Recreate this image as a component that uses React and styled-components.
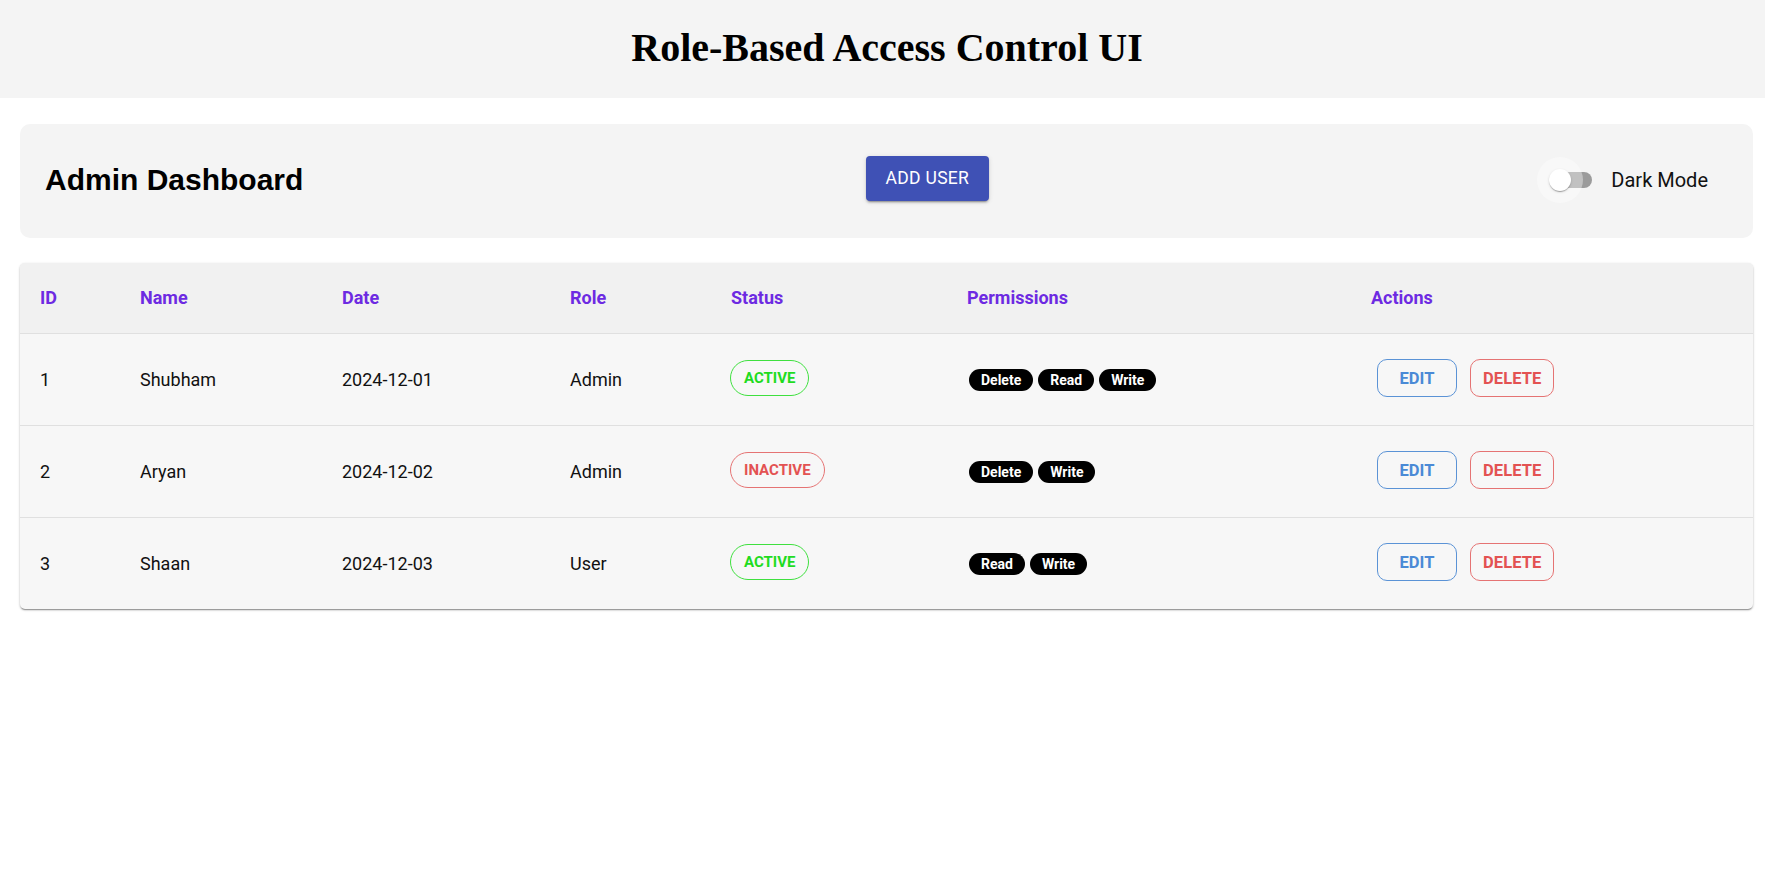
import React, { useState } from "react";
import styled, { createGlobalStyle } from "styled-components";

const GlobalStyle = createGlobalStyle`
  * { box-sizing: border-box; }
  body {
    margin: 0;
    background: #ffffff;
    font-family: Roboto, "Liberation Sans", sans-serif;
    color: #111;
  }
`;

const TopBar = styled.header`
  background: #f4f4f4;
  padding: 25px 0 27px 9px;
  text-align: center;
`;

const PageTitle = styled.h1`
  margin: 0;
  font-family: "Liberation Serif", "Times New Roman", serif;
  font-size: 40px;
  font-weight: 700;
  line-height: 46px;
  color: #000;
`;

const Main = styled.main`
  padding: 26px 12px 0 20px;
  display: flex;
  flex-direction: column;
  gap: 25px;
`;

const DashCard = styled.section`
  background: #f4f4f4;
  border-radius: 10px;
  height: 114px;
  padding: 0 24px 2px;
  display: flex;
  align-items: center;
  justify-content: space-between;
`;

const DashTitle = styled.h2`
  margin: 0 0 0 1px;
  font-family: "Liberation Sans", Arial, sans-serif;
  font-size: 30px;
  font-weight: 700;
  color: #000;
`;

const AddButton = styled.button`
  height: 45px;
  padding: 0 20px;
  margin-bottom: 4px;
  margin-left: 13px;
  border: none;
  border-radius: 4px;
  background: #3f51b5;
  color: #fff;
  font-family: Roboto, sans-serif;
  font-size: 17.5px;
  font-weight: 400;
  letter-spacing: 0.3px;
  box-shadow: 0 3px 1px -2px rgba(0,0,0,.2), 0 2px 2px 0 rgba(0,0,0,.14), 0 1px 5px 0 rgba(0,0,0,.12);
  cursor: pointer;
`;

const ToggleLabel = styled.label`
  display: flex;
  align-items: center;
  gap: 13px;
  margin-right: 21px;
  font-size: 20px;
  color: #111;
  cursor: pointer;
`;

const SwitchBox = styled.span`
  position: relative;
  width: 60px;
  height: 46px;
  display: inline-block;
`;

const Track = styled.span`
  position: absolute;
  left: 16px;
  top: 15px;
  width: 38px;
  height: 16px;
  border-radius: 8px;
  background: ${({ $on }) => ($on ? "#7986cb" : "#9b9b9b")};
`;

const Halo = styled.span`
  position: absolute;
  left: ${({ $on }) => ($on ? "21px" : "-1px")};
  top: 0;
  width: 46px;
  height: 46px;
  border-radius: 50%;
  background: rgba(255, 255, 255, 0.38);
`;

const Thumb = styled.span`
  position: absolute;
  left: ${({ $on }) => ($on ? "33px" : "11px")};
  top: 12px;
  width: 22px;
  height: 22px;
  border-radius: 50%;
  background: ${({ $on }) => ($on ? "#3f51b5" : "#fff")};
  box-shadow: 0 2px 1px -1px rgba(0,0,0,.2), 0 1px 1px 0 rgba(0,0,0,.14), 0 1px 3px 0 rgba(0,0,0,.12);
`;

const TablePaper = styled.div`
  border-radius: 5px;
  overflow: hidden;
  background: #f7f7f7;
  box-shadow: 0 2px 1px -1px rgba(0,0,0,.25), 0 1px 2px 0 rgba(0,0,0,.2), 0 1px 3px 0 rgba(0,0,0,.12);
  margin-bottom: 4px;
`;

const Table = styled.table`
  width: 100%;
  border-collapse: collapse;
  table-layout: fixed;
`;

const HeadRow = styled.tr`
  height: 70px;
  background: #f1f1f1;
  border-bottom: 1px solid #e0e0e0;
`;

const Th = styled.th`
  padding: 0 20px;
  text-align: left;
  font-size: 18px;
  font-weight: 700;
  color: #6d2ae2;
`;

const Row = styled.tr`
  height: 92px;
  border-bottom: 1px solid #e0e0e0;
  &:last-child { border-bottom: none; }
`;

const Td = styled.td`
  padding: 0 20px;
  font-size: 18px;
  color: #111;
  vertical-align: middle;
`;

const StatusChip = styled.span`
  display: inline-flex;
  align-items: center;
  height: 36px;
  padding: 0 13px;
  border-radius: 18px;
  border: 1px solid ${({ $active }) => ($active ? "#3fe03f" : "#e57373")};
  color: ${({ $active }) => ($active ? "#1fdc1f" : "#e35252")};
  font-size: 15px;
  font-weight: 700;
  margin-left: -1px;
  margin-bottom: 2px;
`;

const PermList = styled.div`
  display: flex;
  gap: 5px;
  margin-left: 2px;
  margin-top: 2px;
`;

const PermChip = styled.span`
  display: inline-flex;
  align-items: center;
  height: 22px;
  padding: 0 12px;
  border-radius: 11px;
  background: #000;
  color: #fff;
  font-size: 14px;
  font-weight: 700;
`;

const ActionCell = styled.div`
  display: flex;
  gap: 13px;
  margin-left: 6px;
  margin-bottom: 2px;
`;

const ActionButton = styled.button`
  height: 38px;
  min-width: 80px;
  padding: 0 12px;
  border-radius: 10px;
  background: transparent;
  border: 1px solid ${({ $danger }) => ($danger ? "#e57373" : "#5b93d6")};
  color: ${({ $danger }) => ($danger ? "#e35252" : "#4a8ad6")};
  font-family: Roboto, sans-serif;
  font-size: 16.5px;
  font-weight: 700;
  letter-spacing: 0.1px;
  cursor: pointer;
`;

const columns = [
  { label: "ID", width: 100 },
  { label: "Name", width: 202 },
  { label: "Date", width: 228 },
  { label: "Role", width: 161 },
  { label: "Status", width: 236 },
  { label: "Permissions", width: 404 },
  { label: "Actions", width: 402 },
];

const users = [
  { id: 1, name: "Shubham", date: "2024-12-01", role: "Admin", active: true, perms: ["Delete", "Read", "Write"] },
  { id: 2, name: "Aryan", date: "2024-12-02", role: "Admin", active: false, perms: ["Delete", "Write"] },
  { id: 3, name: "Shaan", date: "2024-12-03", role: "User", active: true, perms: ["Read", "Write"] },
];

const App = () => {
  const [dark, setDark] = useState(false);

  return (
    <>
      <GlobalStyle />
      <TopBar>
        <PageTitle>Role-Based Access Control UI</PageTitle>
      </TopBar>
      <Main>
        <DashCard>
          <DashTitle>Admin Dashboard</DashTitle>
          <AddButton>ADD USER</AddButton>
          <ToggleLabel onClick={() => setDark(!dark)}>
            <SwitchBox>
              <Track $on={dark} />
              <Halo $on={dark} />
              <Thumb $on={dark} />
            </SwitchBox>
            Dark Mode
          </ToggleLabel>
        </DashCard>

        <TablePaper>
          <Table>
            <colgroup>
              {columns.map(c => <col key={c.label} style={{ width: c.width }} />)}
            </colgroup>
            <thead>
              <HeadRow>
                {columns.map(c => <Th key={c.label}>{c.label}</Th>)}
              </HeadRow>
            </thead>
            <tbody>
              {users.map(u => (
                <Row key={u.id}>
                  <Td>{u.id}</Td>
                  <Td>{u.name}</Td>
                  <Td>{u.date}</Td>
                  <Td>{u.role}</Td>
                  <Td>
                    <StatusChip $active={u.active}>{u.active ? "ACTIVE" : "INACTIVE"}</StatusChip>
                  </Td>
                  <Td>
                    <PermList>
                      {u.perms.map(p => <PermChip key={p}>{p}</PermChip>)}
                    </PermList>
                  </Td>
                  <Td>
                    <ActionCell>
                      <ActionButton>EDIT</ActionButton>
                      <ActionButton $danger>DELETE</ActionButton>
                    </ActionCell>
                  </Td>
                </Row>
              ))}
            </tbody>
          </Table>
        </TablePaper>
      </Main>
    </>
  );
};

export default App;
